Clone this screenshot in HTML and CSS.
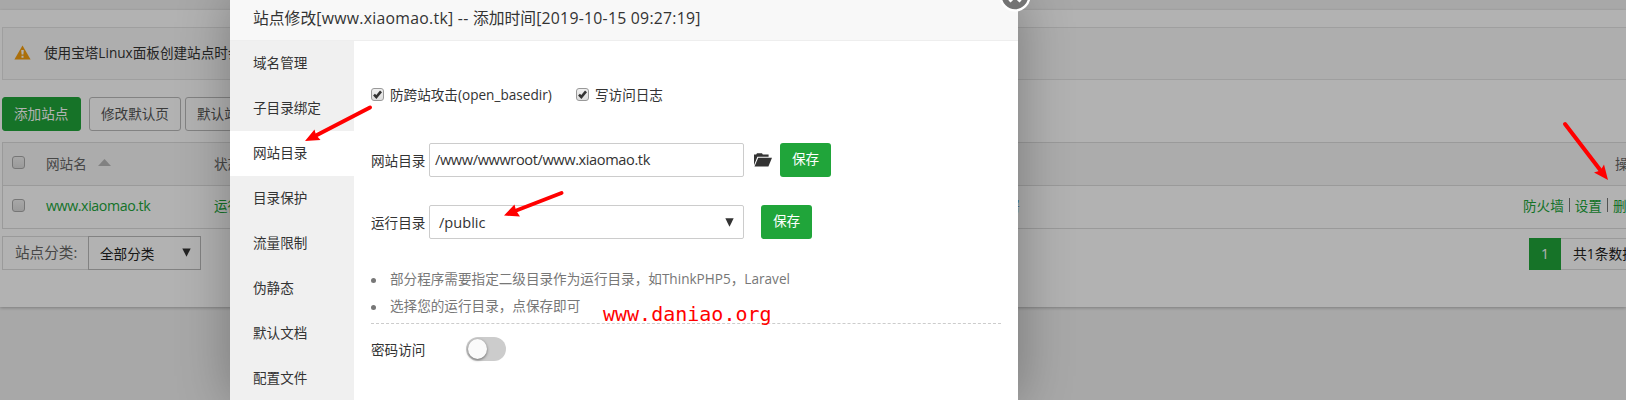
FILE: index.html
```html
<!DOCTYPE html>
<html lang="zh-CN">
<head>
<meta charset="utf-8">
<title>站点修改</title>
<link rel="stylesheet" href="styles.css">
</head>
<body>
<div class="page">
  <main class="panel">
    <div class="notice">
      <svg class="warn" width="17" height="15" viewBox="0 0 17 15"><path d="M8.5 0.5 16.6 14.6H0.4Z" fill="#f5a011"/><path d="M7.2 5h2.6l-.4 4.6H7.6ZM7.5 10.8h2v1.9h-2Z" fill="#fff"/></svg>
      <span>使用宝塔Linux面板创建站点时会</span>
    </div>
    <div class="toolbar">
      <span class="btn primary">添加站点</span>
      <span class="btn first">修改默认页</span>
      <span class="btn">默认站点</span>
    </div>
    <div class="table">
      <div class="row head">
        <i class="box"></i><span class="name">网站名<svg class="sort" width="13" height="7" viewBox="0 0 13 7"><path d="M6.5 0 13 7H0Z" fill="#b9b9b9"/></svg></span><span class="status">状态</span><span class="ops-head">操作</span>
      </div>
      <div class="row">
        <i class="box"></i><span class="name green lat">www.xiaomao.tk</span><span class="status green">运行</span><span class="ssl">未部署</span><span class="ops"><b>防火墙</b><i class="bar"></i><b>设置</b><i class="bar"></i><b>删除</b></span>
      </div>
    </div>
    <div class="footer">
      <span class="label">站点分类:</span>
      <span class="filter">全部分类<svg width="9" height="9" viewBox="0 0 9 9"><path d="M.3.5h8.4L4.5 8.7Z" fill="#333"/></svg></span>
      <span class="pager"><b>1</b><span>共1条数据</span></span>
    </div>
  </main>
</div>
<div class="shade"></div>
<section class="modal">
  <header class="title">站点修改<span class="t1">[www.xiaomao.tk] -- </span>添加时间<span class="t2">[2019-10-15 09:27:19]</span></header>
  <svg class="close" width="32" height="32" viewBox="0 0 32 32"><circle cx="16" cy="16" r="14.4" fill="#737373" stroke="#fff" stroke-width="2.4"/><path d="M10.5 10.5 21.5 21.5M21.5 10.5 10.5 21.5" stroke="#fff" stroke-width="3"/></svg>
  <div class="body">
    <nav class="side">
      <a>域名管理</a><a>子目录绑定</a><a class="on">网站目录</a><a>目录保护</a><a>流量限制</a><a>伪静态</a><a>默认文档</a><a>配置文件</a>
    </nav>
    <div class="content">
      <div class="checks">
        <i class="box"><svg width="11" height="11" viewBox="0 0 11 11"><path d="M2 5.7 4.3 8 9 2.4" fill="none" stroke="#333" stroke-width="2.6"/></svg></i><span class="c1">防跨站攻击<em>(open_basedir)</em></span>
        <i class="box"><svg width="11" height="11" viewBox="0 0 11 11"><path d="M2 5.7 4.3 8 9 2.4" fill="none" stroke="#333" stroke-width="2.6"/></svg></i><span class="c2">写访问日志</span>
      </div>
      <div class="field">
        <span class="flabel">网站目录</span><span class="input path">/www/wwwroot/www.xiaomao.tk</span>
        <svg class="folder" width="18" height="14" viewBox="0 0 18 14"><path d="M0 12.3V1.4h2.2L3 .3h5l.8 1.1h5.8v2.3H3.4Z" fill="#333"/><path d="M4.2 4.7H18L14.4 13.4H.5Z" fill="#333"/></svg>
        <span class="save">保存</span>
      </div>
      <div class="field second">
        <span class="flabel">运行目录</span><span class="input select">/public<svg width="9" height="9" viewBox="0 0 9 9"><path d="M.3.3h8.4L4.5 8.7Z" fill="#333"/></svg></span>
        <span class="save">保存</span>
      </div>
      <ul class="tips">
        <li>部分程序需要指定二级目录作为运行目录，如<em class="tp">ThinkPHP5</em>，<em class="lv">Laravel</em></li>
        <li>选择您的运行目录，点保存即可</li>
      </ul>
      <div class="access"><span>密码访问</span><span class="toggle"><i></i></span></div>
    </div>
  </div>
</section>
<div class="mark">www.daniao.org</div>
<svg class="arrows" width="1626" height="400" viewBox="0 0 1626 400">
  <g fill="#f00" stroke="#f00" stroke-linecap="round">
    <path d="M370 107.500 315 136" stroke-width="4"/><path d="M305 141 314.500 129.500 316 135 320.500 140Z" stroke="none"/>
    <path d="M561.500 193 515 211" stroke-width="4"/><path d="M504 215.500 514.500 204.500 516 210.500 520 216.500Z" stroke="none"/>
    <path d="M1565 124 1601 171" stroke-width="4"/><path d="M1608 180 1594 172.500 1600.500 170.500 1604 164.500Z" stroke="none"/>
  </g>
</svg>
</body>
</html>
```
FILE: styles.css
```css
* { box-sizing: border-box; }
body {
  margin: 0;
  width: 1626px;
  height: 400px;
  overflow: hidden;
  position: relative;
  font-family: "Open Sans", "Noto Sans CJK SC", sans-serif;
  font-size: 13.6px;
  color: #333;
  white-space: nowrap;
}
i, em, b { font-style: normal; font-weight: normal; }
svg { display: block; flex: none; }

.page { height: 400px; padding-top: 10px; background: #f1f1f1; overflow: hidden; }
.panel {
  height: 297px;
  padding: 17px 0 0 2px;
  background: #fff;
  box-shadow: 0 1px 3px rgba(0, 0, 0, .25);
}
.notice {
  display: flex;
  align-items: center;
  gap: 13px;
  height: 53px;
  padding: 0 0 3px 11px;
  background: #f9f9f9;
  border: 1px solid #e4e4e4;
  width: 1640px;
}
.toolbar { display: flex; gap: 4px; margin-top: 17px; }
.btn {
  height: 34px;
  line-height: 31px;
  padding: 0 11px;
  border: 1px solid #bbb;
  border-radius: 3px;
  color: #555;
}
.btn.first { margin-left: 4px; }
.primary { width: 79px; background: #20a53a; border-color: #20a53a; color: #fff; }

.table { width: 1640px; margin-top: 11px; border: 1px solid #ddd; height: 87px; }
.row { display: flex; align-items: center; height: 42px; padding: 0 0 4px 9px; }
.row > * { flex: none; }
.head { height: 43px; padding-bottom: 3px; background: #f6f6f6; border-bottom: 1px solid #ddd; color: #666; }
.box {
  flex: none;
  width: 13px;
  height: 13px;
  border: 1px solid #aaa;
  border-radius: 3px;
  background: linear-gradient(#f0f0f0, #ddd);
}
.name { display: flex; align-items: center; gap: 11px; width: 168px; margin-left: 21px; }
.lat { font-size: 14.2px; letter-spacing: -.4px; }
.green, .ops b { color: #20a53a; }
.status { width: 100px; }
.ssl { width: 42px; margin-left: 665px; color: #3a8ac8; }
.ops-head { margin-left: 1301px; }
.ops { display: flex; align-items: center; gap: 5px; margin-left: 502px; }
.bar { width: 1px; height: 14px; background: #777; }

.footer { display: flex; height: 34px; margin-top: 7px; }
.footer > * { flex: none; }
.label { width: 86px; padding-left: 12px; line-height: 31px; font-size: 14.6px; border: 1px solid #ddd; border-right: 0; color: #666; }
.filter { display: flex; align-items: center; justify-content: space-between; width: 113px; padding: 0 9px 1px 11px; border: 1px solid #bbb; color: #222; }
.pager { display: flex; height: 32px; margin: 2px 0 0 1328px; line-height: 29px; color: #222; }
.pager b { width: 32px; padding-top: 1px; text-align: center; background: #20a53a; color: #fff; font-size: 14px; }
.pager span { padding-left: 12px; width: 110px; border: 1px solid #ddd; border-left: 0; font-size: 13.8px; }

.shade { position: absolute; inset: 0; background: rgba(0, 0, 0, .3); }
.modal {
  position: absolute;
  left: 230px;
  top: -4px;
  width: 788px;
  height: 404px;
  background: #fff;
  box-shadow: 1px 1px 50px rgba(0, 0, 0, .3);
}
.title {
  height: 45px;
  padding: 4px 0 0 23px;
  line-height: 37px;
  background: #f8f8f8;
  border-bottom: 1px solid #eee;
  font-size: 15.8px;
}
.t1 { letter-spacing: .28px; }
.t2 { letter-spacing: .25px; }
.close { position: absolute; left: 769px; top: -16px; }
.body { display: flex; height: 359px; overflow: hidden; }
.side { width: 124px; background: #f0f0f0; }
.side a { display: block; height: 45px; line-height: 43px; padding-left: 23px; }
.side .on { background: #fff; }
.content { padding: 45px 17px 0; flex: 1; }
.checks { display: flex; align-items: center; height: 16px; }
.checks .box { border-color: #999; }
.c1 { width: 186px; margin-left: 6px; }
.c2 { margin-left: 6px; }
.field { display: flex; align-items: center; height: 34px; margin-top: 41px; }
.second { margin-top: 28px; }
.flabel { width: 58px; padding-bottom: 1px; }
.input { width: 315px; height: 34px; line-height: 31px; padding: 0 5px; border: 1px solid #ccc; border-radius: 2px; font-size: 14.6px; }
.path { letter-spacing: -.4px; }
.select { display: flex; align-items: center; justify-content: space-between; padding: 0 9px; margin-right: 17px; }
.folder { margin: 0 8px 0 10px; }
.save { width: 51px; height: 34px; line-height: 32px; text-align: center; border-radius: 3px; background: #20a53a; color: #fff; }
.tips { margin: 27px 0 0; padding: 0 0 3px; list-style: none; border-bottom: 1px dashed #ccc; color: #777; }
.tips li { position: relative; height: 27px; line-height: 26px; padding-left: 19px; }
.tips li::before { content: ""; position: absolute; left: 0; top: 12px; width: 5px; height: 5px; border-radius: 50%; background: #777; }
.access { display: flex; align-items: center; height: 50px; }
.toggle { width: 40px; height: 24px; margin-left: 41px; border-radius: 12px; background: #ccc; }
.toggle i { display: block; width: 19px; height: 20px; margin: 2px; border-radius: 50%; background: #fafafa; box-shadow: 0 1px 3px rgba(0, 0, 0, .5); }
.mark { position: absolute; left: 603px; top: 301px; font: 20px/26px "DejaVu Sans Mono", monospace; color: #f00; }
.arrows { position: absolute; left: 0; top: 0; }
```
